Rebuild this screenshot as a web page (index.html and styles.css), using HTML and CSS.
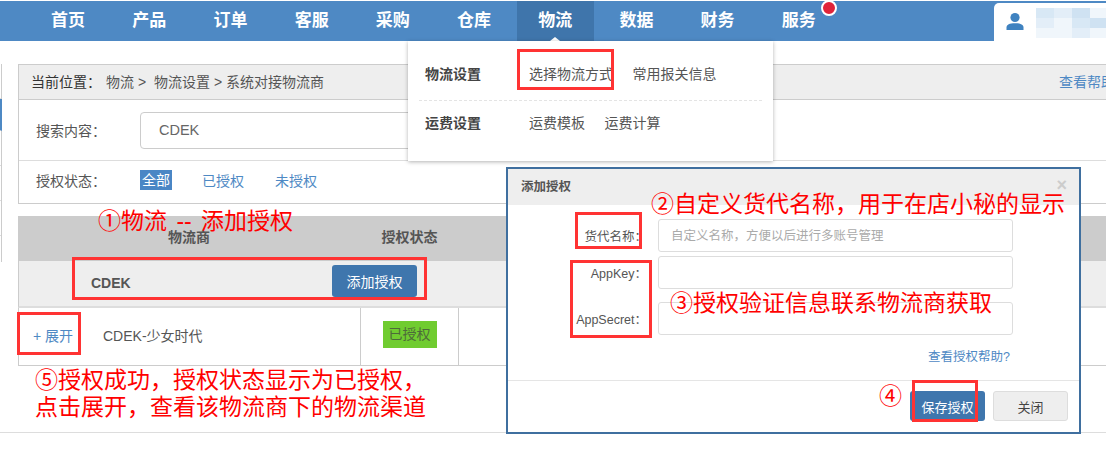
FILE: index.html
```html
<!DOCTYPE html>
<html lang="zh-CN">
<head>
    <meta charset="UTF-8">
    <meta name="viewport" content="width=device-width, initial-scale=1.0">
    <title>系统对接物流商</title>
    <link rel="stylesheet" href="styles.css">
</head>
<body>
    <nav class="navbar">
        <a href="#" class="nav-link">首页</a>
        <a href="#" class="nav-link">产品</a>
        <a href="#" class="nav-link">订单</a>
        <a href="#" class="nav-link">客服</a>
        <a href="#" class="nav-link">采购</a>
        <a href="#" class="nav-link">仓库</a>
        <a href="#" class="nav-link active">物流</a>
        <a href="#" class="nav-link">数据</a>
        <a href="#" class="nav-link">财务</a>
        <a href="#" class="nav-link has-dot">服务</a>
        <div class="user-box">
            <svg class="user-icon" width="20" height="20" viewBox="0 0 20 20">
                <circle cx="10" cy="5.5" r="4.6" fill="#3f82c0"/>
                <path d="M1.5 18v-2.6c0-2.8 3-4.2 8.500-4.200s8.500 1.400 8.500 4.200V18z" fill="#3f82c0"/>
            </svg>
            <div class="user-name">
                <i class="b1"></i><i class="b2"></i><i class="b3"></i><i class="b4"></i>
                <i class="b2"></i><i class="b4"></i><i class="b1"></i><i class="b3"></i>
                <i class="b4"></i><i class="b4"></i><i class="b2"></i><i class="b4"></i>
            </div>
        </div>
    </nav>

    <div class="main">
        <div class="side-sliver">
            <div class="side-item"></div>
            <div class="side-item current"></div>
            <div class="side-item"></div>
            <div class="side-item"></div>
            <div class="side-item"></div>
        </div>

        <div class="content">
            <div class="panel">
                <div class="crumbs">
                    <span class="crumb-title">当前位置：</span>
                    <span>物流 &gt;</span>
                    <span class="crumb-next">物流设置 &gt; 系统对接物流商</span>
                    <a href="#" class="help-link">查看帮助</a>
                </div>
                <div class="search-row">
                    <label class="row-label">搜索内容：</label>
                    <input type="text" class="search-input" value="CDEK">
                </div>
                <div class="status-row">
                    <span class="row-label">授权状态：</span>
                    <a href="#" class="chip">全部</a>
                    <a href="#" class="status-link">已授权</a>
                    <a href="#" class="status-link">未授权</a>
                </div>
            </div>

            <div class="table">
                <div class="table-head">
                    <div class="col-name">物流商</div>
                    <div class="col-status">授权状态</div>
                </div>
                <div class="group-row">
                    <strong>CDEK</strong>
                    <button class="btn btn-blue">添加授权</button>
                </div>
                <div class="data-row">
                    <div class="col-name">
                        <a href="#" class="expand">+ 展开</a>
                        <span>CDEK-少女时代</span>
                    </div>
                    <div class="col-status"><span class="badge-ok">已授权</span></div>
                </div>
            </div>
        </div>
    </div>
    <div class="page-foot"></div>

    <!-- 物流下拉菜单 -->
    <div class="dropdown">
        <div class="drop-row first">
            <b>物流设置</b>
            <a href="#" class="w-link">选择物流方式</a>
            <a href="#">常用报关信息</a>
        </div>
        <div class="drop-row">
            <b>运费设置</b>
            <a href="#" class="w-link">运费模板</a>
            <a href="#">运费计算</a>
        </div>
    </div>

    <!-- 添加授权弹窗 -->
    <div class="modal">
        <div class="modal-head">
            <span>添加授权</span>
            <span class="modal-close">×</span>
        </div>
        <div class="modal-body">
            <div class="form-group">
                <label>货代名称：</label>
                <input type="text" placeholder="自定义名称，方便以后进行多账号管理">
            </div>
            <div class="form-group">
                <label>AppKey：</label>
                <input type="text">
            </div>
            <div class="form-group tall">
                <label>AppSecret：</label>
                <input type="text">
            </div>
            <a href="#" class="modal-help">查看授权帮助?</a>
        </div>
        <div class="modal-foot">
            <button class="btn btn-blue">保存授权</button>
            <button class="btn btn-gray">关闭</button>
        </div>
    </div>

    <!-- 红色标注 -->
    <div class="note n1">①物流 -- 添加授权</div>
    <div class="note n2">②自定义货代名称，用于在店小秘的显示</div>
    <div class="note n3">③授权验证信息联系物流商获取</div>
    <div class="note n4">④</div>
    <div class="note n5">⑤授权成功，授权状态显示为已授权，<br>点击展开，查看该物流商下的物流渠道</div>

    <div class="mark m1"></div>
    <div class="mark m2"></div>
    <div class="mark m3"></div>
    <div class="mark m4"></div>
    <div class="mark m5"></div>
    <div class="mark m6"></div>
</body>
</html>
```

FILE: styles.css
```css
* {
    margin: 0;
    padding: 0;
    box-sizing: border-box;
    font-family: "Liberation Sans", "Noto Sans CJK SC", sans-serif;
}

html, body {
    height: 452px;
    overflow: hidden;
    background-color: white;
    position: relative;
}

a {
    text-decoration: none;
}

/* 顶部导航 */
.navbar {
    display: flex;
    height: 40px;
    margin-top: 1px;
    padding-left: 27.500px;
    background-color: #4e89c4;
}

.nav-link {
    position: relative;
    width: 77px;
    margin: 0 2.1px;
    line-height: 39px;
    text-align: center;
    color: white;
    font-size: 17px;
    font-weight: bold;
}

.nav-link.active {
    background-color: #3f75ab;
}

.nav-link.active::after {
    content: "";
    position: absolute;
    left: 33px;
    bottom: 0;
    border-left: 5px solid transparent;
    border-right: 5px solid transparent;
    border-bottom: 4px solid white;
}

.has-dot::after {
    content: "";
    position: absolute;
    left: 61px;
    top: -1px;
    width: 12px;
    height: 12px;
    border-radius: 50%;
    background-color: #e0243a;
    border: 2px solid white;
}

.user-box {
    display: flex;
    align-items: center;
    margin-left: auto;
    width: 112px;
    margin-top: 2px;
    padding-left: 11px;
    background-color: white;
    border-top-left-radius: 5px;
}

.user-icon {
    flex-shrink: 0;
}

.user-name {
    display: grid;
    grid-template-columns: repeat(4, 18px);
    grid-auto-rows: 10px;
    margin-left: 11px;
    margin-top: 2px;
}

.b1 { background-color: #d8e8f5; }
.b2 { background-color: #e3eef8; }
.b3 { background-color: #cfe2f2; }
.b4 { background-color: #f0f6fb; }

/* 主体 */
.main {
    display: flex;
    margin-top: 23px;
}

.side-sliver {
    width: 3px;
    height: 198px;
    margin-right: 16px;
    border-right: 1px solid #ccc;
}

.side-item {
    height: 35px;
    border-bottom: 1px solid #ddd;
}

.side-item.current {
    height: 32px;
    border-right: 2px solid #4e89c4;
    margin-right: -1px;
}

.content {
    width: 1130px;
    flex-shrink: 0;
}

.panel {
    border: 1px solid #ccc;
    color: #555;
    font-size: 14px;
}

.crumbs {
    display: flex;
    align-items: center;
    height: 35px;
    padding: 0 0 3px 12px;
    background-color: #eee;
    border-bottom: 1px solid #ccc;
}

.crumb-title {
    margin-right: 5px;
    color: #333;
}

.crumb-next {
    margin-left: 8px;
}

.help-link {
    margin-left: auto;
    margin-right: 32px;
    color: #4e89c4;
}

.row-label {
    display: inline-block;
    width: 104px;
}

.search-row {
    display: flex;
    align-items: center;
    height: 61px;
    padding-left: 17px;
    border-bottom: 1px solid #ddd;
}

.search-input {
    width: 500px;
    height: 37px;
    padding-left: 18px;
    border: 1px solid #ccc;
    border-radius: 4px;
    font-size: 14.5px;
    color: #666;
}

.status-row {
    display: flex;
    align-items: center;
    height: 42px;
    padding: 0 0 4px 17px;
}

.chip {
    width: 32px;
    line-height: 20px;
    text-align: center;
    color: white;
    background-color: #4a86c5;
    font-size: 14px;
}

.status-link {
    margin-left: 30px;
    margin-right: 1px;
    color: #4e89c4;
    font-size: 14px;
}

/* 表格 */
.table {
    margin-top: 12px;
    font-size: 14px;
    color: #555;
}

.table-head {
    display: flex;
    height: 45px;
    line-height: 42px;
    background-color: #ccc;
    font-weight: bold;
}

.col-name {
    width: 342px;
}

.table-head .col-name {
    text-align: center;
}

.col-status {
    width: 99px;
    text-align: center;
}

.group-row {
    display: flex;
    align-items: flex-start;
    justify-content: space-between;
    width: 100%;
    height: 47px;
    padding: 4px 731px 0 72px;
    background-color: #eee;
    border-bottom: 2px solid #ddd;
    border-left: 1px solid #ccc;
}

.group-row strong {
    margin-top: 10px;
}

.btn {
    height: 32px;
    border: none;
    border-radius: 3px;
    font-size: 14px;
    cursor: pointer;
}

.btn-blue {
    width: 85px;
    background-color: #3f76ad;
    color: white;
}

.btn-gray {
    width: 75px;
    background-color: #eee;
    border: 1px solid #ddd;
    color: #444;
}

.data-row {
    display: flex;
    height: 58px;
    border: 1px solid #ccc;
    border-top: none;
}

.data-row .col-name {
    display: flex;
    align-items: center;
    width: 341px;
    padding: 0 0 4px 14px;
}

.data-row .col-status {
    display: flex;
    align-items: center;
    justify-content: center;
    padding-bottom: 4px;
    border-left: 1px solid #ccc;
    border-right: 1px solid #ccc;
}

.expand {
    width: 70px;
    color: #4e89c4;
}

.badge-ok {
    width: 54px;
    line-height: 27px;
    background-color: #70cc30;
    color: #4d6b3a;
}

.page-foot {
    margin-top: 66px;
    border-top: 1px solid #ddd;
}

/* 下拉菜单 */
.dropdown {
    position: absolute;
    left: 408px;
    top: 41px;
    width: 365px;
    height: 120px;
    padding: 11px 11px 0;
    background-color: white;
    box-shadow: 0 1px 4px rgba(0,0,0,0.3);
    font-size: 14px;
}

.drop-row {
    display: flex;
    align-items: center;
    height: 49px;
    padding-bottom: 7px;
}

.drop-row.first {
    border-bottom: 1px dashed #e4e4e4;
}

.drop-row b {
    width: 110px;
    padding-left: 6px;
    color: #444;
}

.drop-row a {
    margin-right: 19.500px;
    color: #555;
}

/* 弹窗 */
.modal {
    position: absolute;
    left: 506px;
    top: 167px;
    width: 575px;
    height: 267px;
    background-color: white;
    border: 2px solid #3f6f9f;
    font-size: 12.5px;
    color: #555;
}

.modal-head {
    display: flex;
    justify-content: space-between;
    align-items: center;
    height: 36px;
    padding: 0 12px 3px 13px;
    background-color: #eee;
    font-weight: bold;
}

.modal-close {
    color: #ccc;
    font-size: 18px;
}

.modal-body {
    display: flex;
    flex-direction: column;
    height: 175px;
    padding-top: 14px;
}

.form-group {
    display: flex;
    align-items: center;
    margin-bottom: 4px;
}

.form-group.tall {
    margin-top: 9px;
}

.form-group label {
    width: 139px;
    text-align: right;
}

.form-group input {
    width: 355px;
    height: 33px;
    margin-left: 11px;
    padding-left: 12px;
    border: 1px solid #ddd;
    border-radius: 3px;
    font-size: 12.5px;
}

.form-group input::placeholder {
    color: #aaa;
}

.modal-help {
    align-self: flex-end;
    margin-top: 7px;
    margin-right: 69px;
    font-size: 12.5px;
    color: #4e89c4;
}

.modal-foot {
    display: flex;
    justify-content: flex-end;
    gap: 8px;
    padding: 10px 11px 0 0;
    border-top: 1px solid #e5e5e5;
}

.modal-foot .btn {
    width: 75px;
    height: 30px;
    font-size: 13px;
}

/* 标注 */
.note {
    position: absolute;
    color: #f00;
    font-size: 23px;
    line-height: 28px;
    white-space: nowrap;
}

.n1 { left: 98px; top: 207px; word-spacing: 3px; }
.n2 { left: 651px; top: 190px; }
.n3 { left: 670px; top: 289px; }
.n4 { left: 879px; top: 382px; }
.n5 { left: 35px; top: 367px; line-height: 27px; }

.mark {
    position: absolute;
    border: 3px solid #f33;
}

.m1 { left: 517px; top: 49px; width: 97px; height: 41px; }
.m2 { left: 72px; top: 257px; width: 355px; height: 43px; }
.m3 { left: 17px; top: 312px; width: 64px; height: 43px; }
.m4 { left: 575px; top: 212px; width: 67px; height: 37px; }
.m5 { left: 570px; top: 260px; width: 82px; height: 78px; }
.m6 { left: 912px; top: 380px; width: 66px; height: 42px; }
```
